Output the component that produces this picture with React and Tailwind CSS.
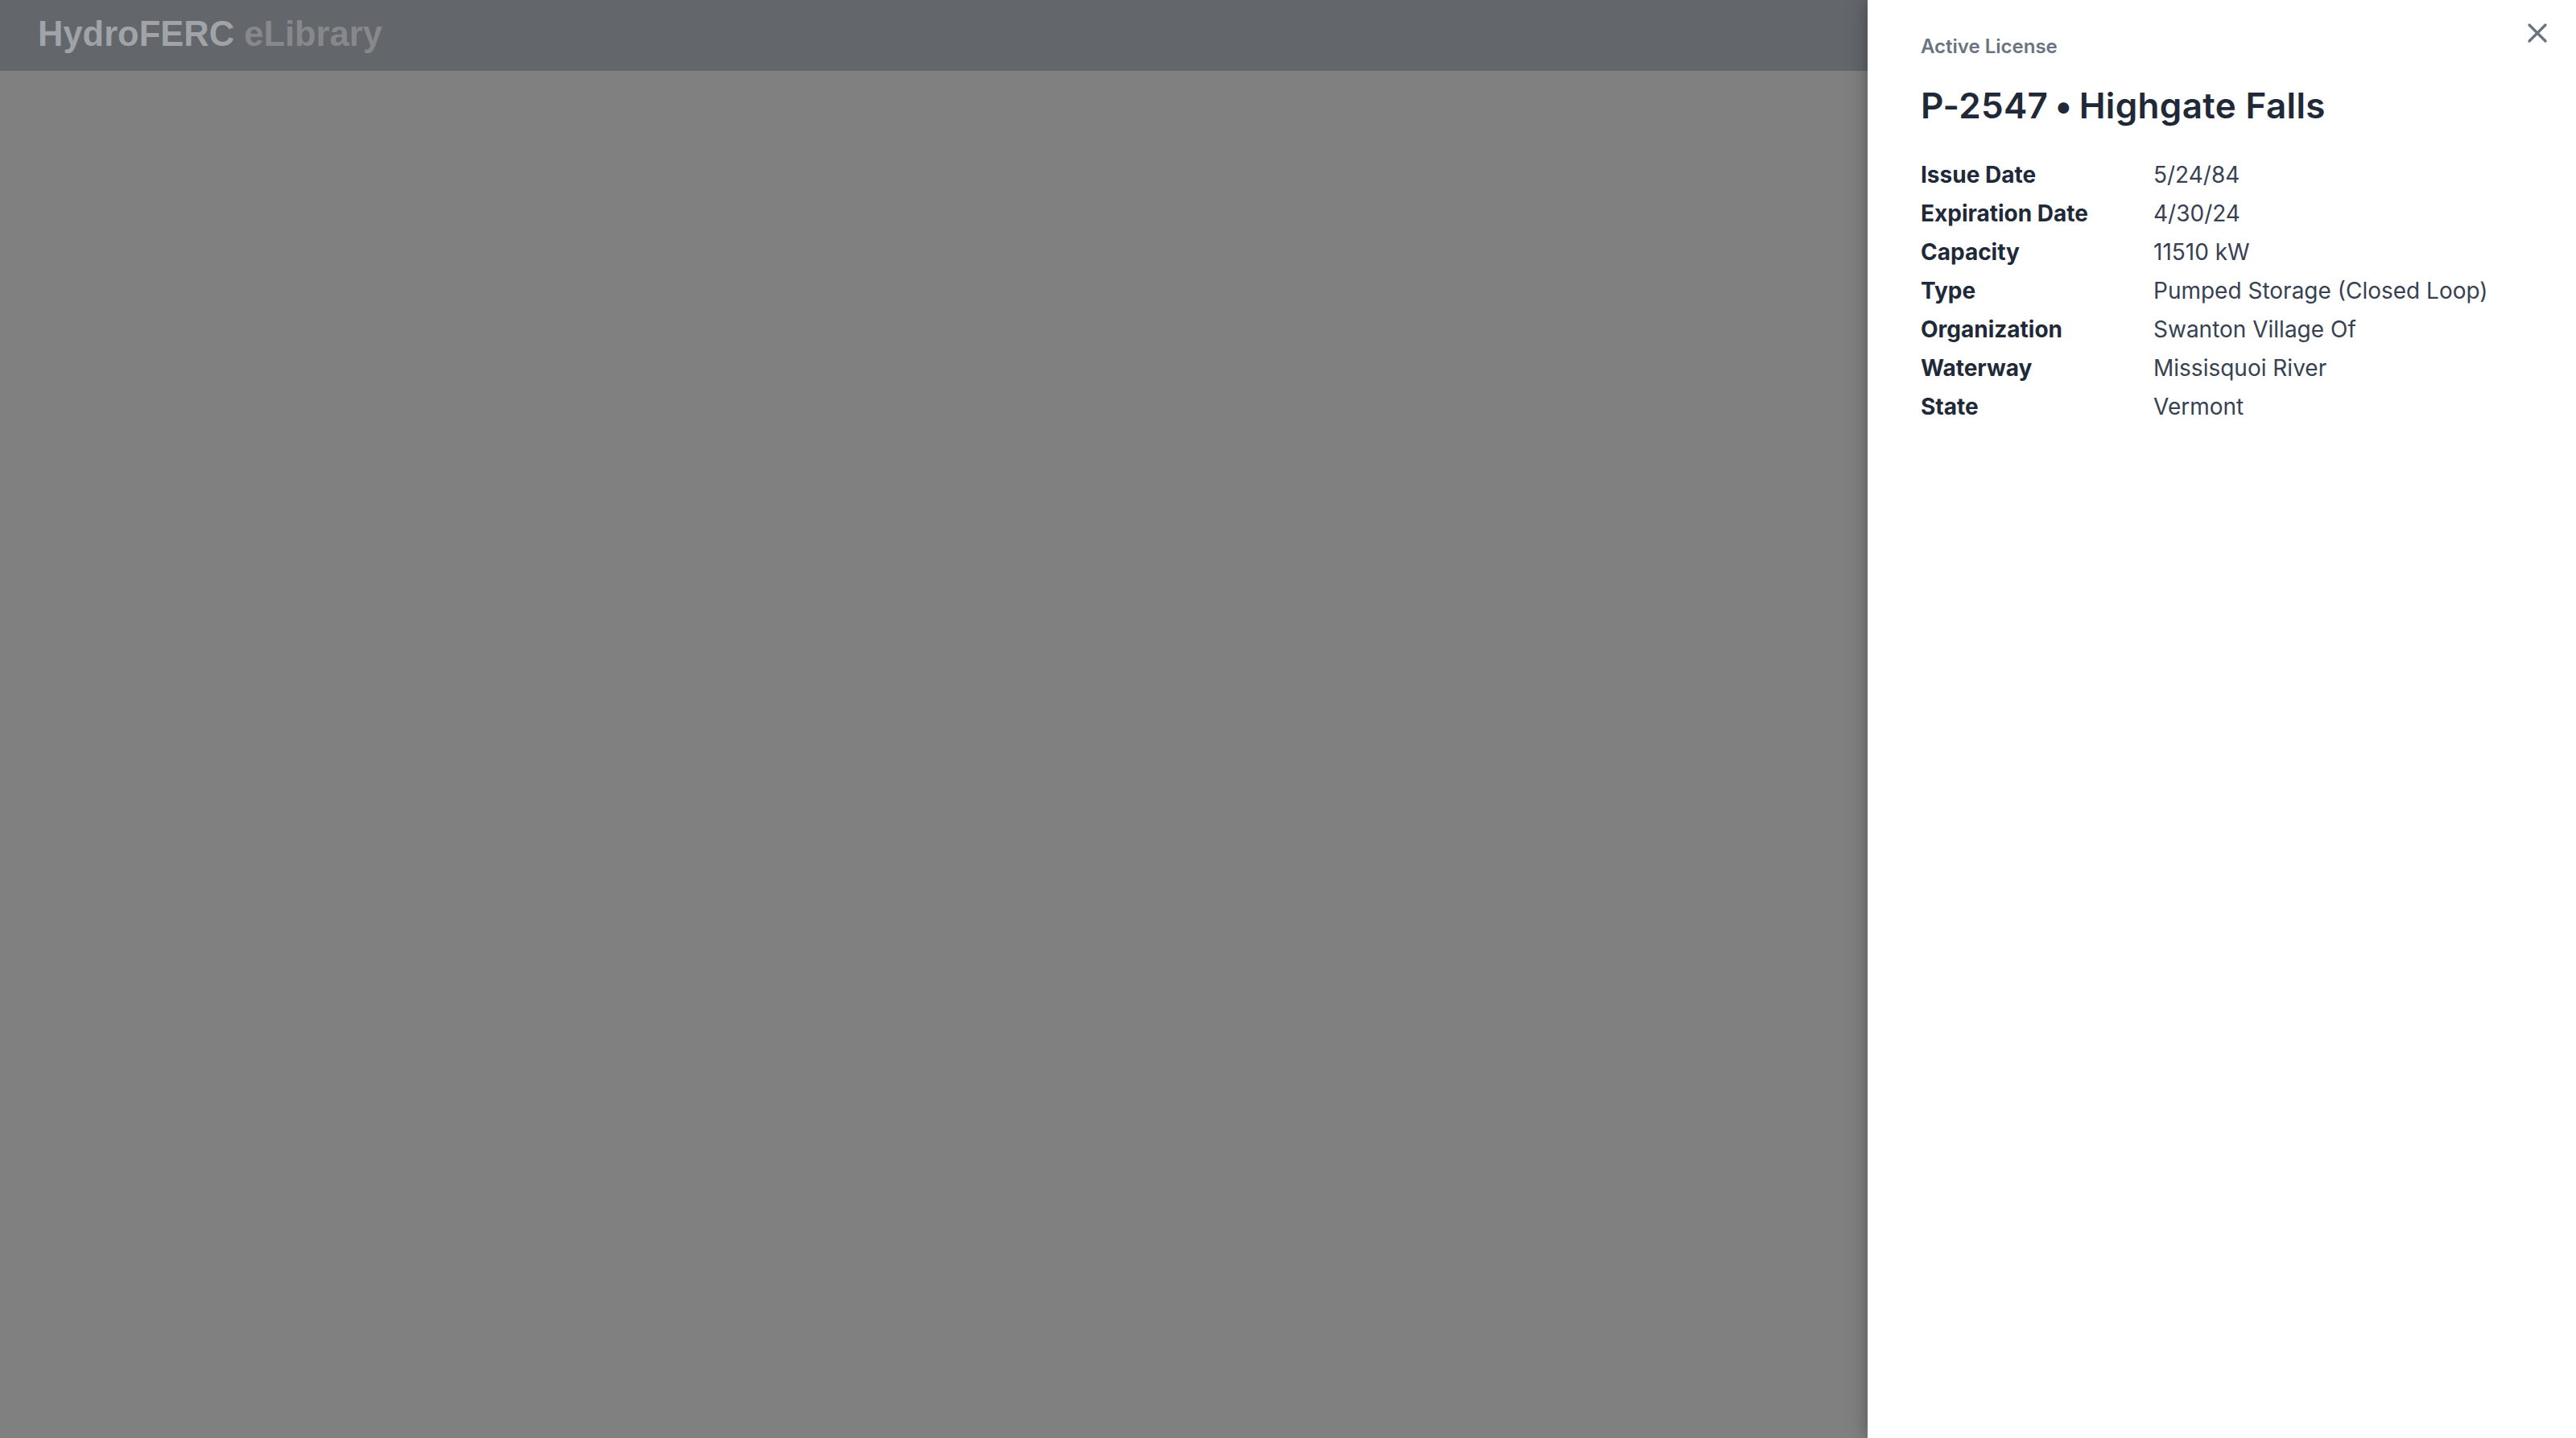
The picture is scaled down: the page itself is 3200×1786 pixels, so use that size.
import React from "react";
import { X } from "lucide-react";

const rows = [
  ["Issue Date", "5/24/84"],
  ["Expiration Date", "4/30/24"],
  ["Capacity", "11510 kW"],
  ["Type", "Pumped Storage (Closed Loop)"],
  ["Organization", "Swanton Village Of"],
  ["Waterway", "Missisquoi River"],
  ["State", "Vermont"],
];

export default function App() {
  return (
    <div className="flex h-[1786px] w-[3200px] overflow-hidden bg-[#808080]">
      <div className="flex flex-1 flex-col">
        <header
          className="h-[88px] shrink-0 bg-[#63666b] pl-[47px] pt-[18px] text-[43.5px] font-bold leading-[48px]"
          style={{ fontFamily: '"Liberation Sans", Arial, sans-serif' }}
        >
          <span className="text-[#a0a3a7]">HydroFERC</span>{" "}
          <span className="text-[#86888c]">eLibrary</span>
        </header>
        <main className="flex-1 bg-[#808080]" />
      </div>
      <aside
        className="relative h-full w-[880px] shrink-0 bg-white pl-[66px] pt-[42px] shadow-[0_0_24px_rgba(0,0,0,0.35)]"
        style={{ fontFamily: 'Inter, "Noto Sans", sans-serif' }}
      >
        <button className="absolute right-[28px] top-[21px] text-[#6b7280]">
          <X size={40} strokeWidth={2} />
        </button>
        <div className="text-[24px] font-semibold leading-[32px] text-[#6b7280]">
          Active License
        </div>
        <h1 className="mt-[29px] text-[44px] font-semibold leading-[56px] tracking-[0.35px] text-[#1f2937]">
          P-2547<span className="[word-spacing:-3.5px]"> • </span>Highgate Falls
        </h1>
        <dl className="mt-[34px] grid grid-cols-[289px_1fr] text-[28px] leading-[48px]">
          {rows.map(([k, v]) => (
            <React.Fragment key={k}>
              <dt className="font-bold text-[#1f2937]">{k}</dt>
              <dd className="text-[#374151]">{v}</dd>
            </React.Fragment>
          ))}
        </dl>
      </aside>
    </div>
  );
}
